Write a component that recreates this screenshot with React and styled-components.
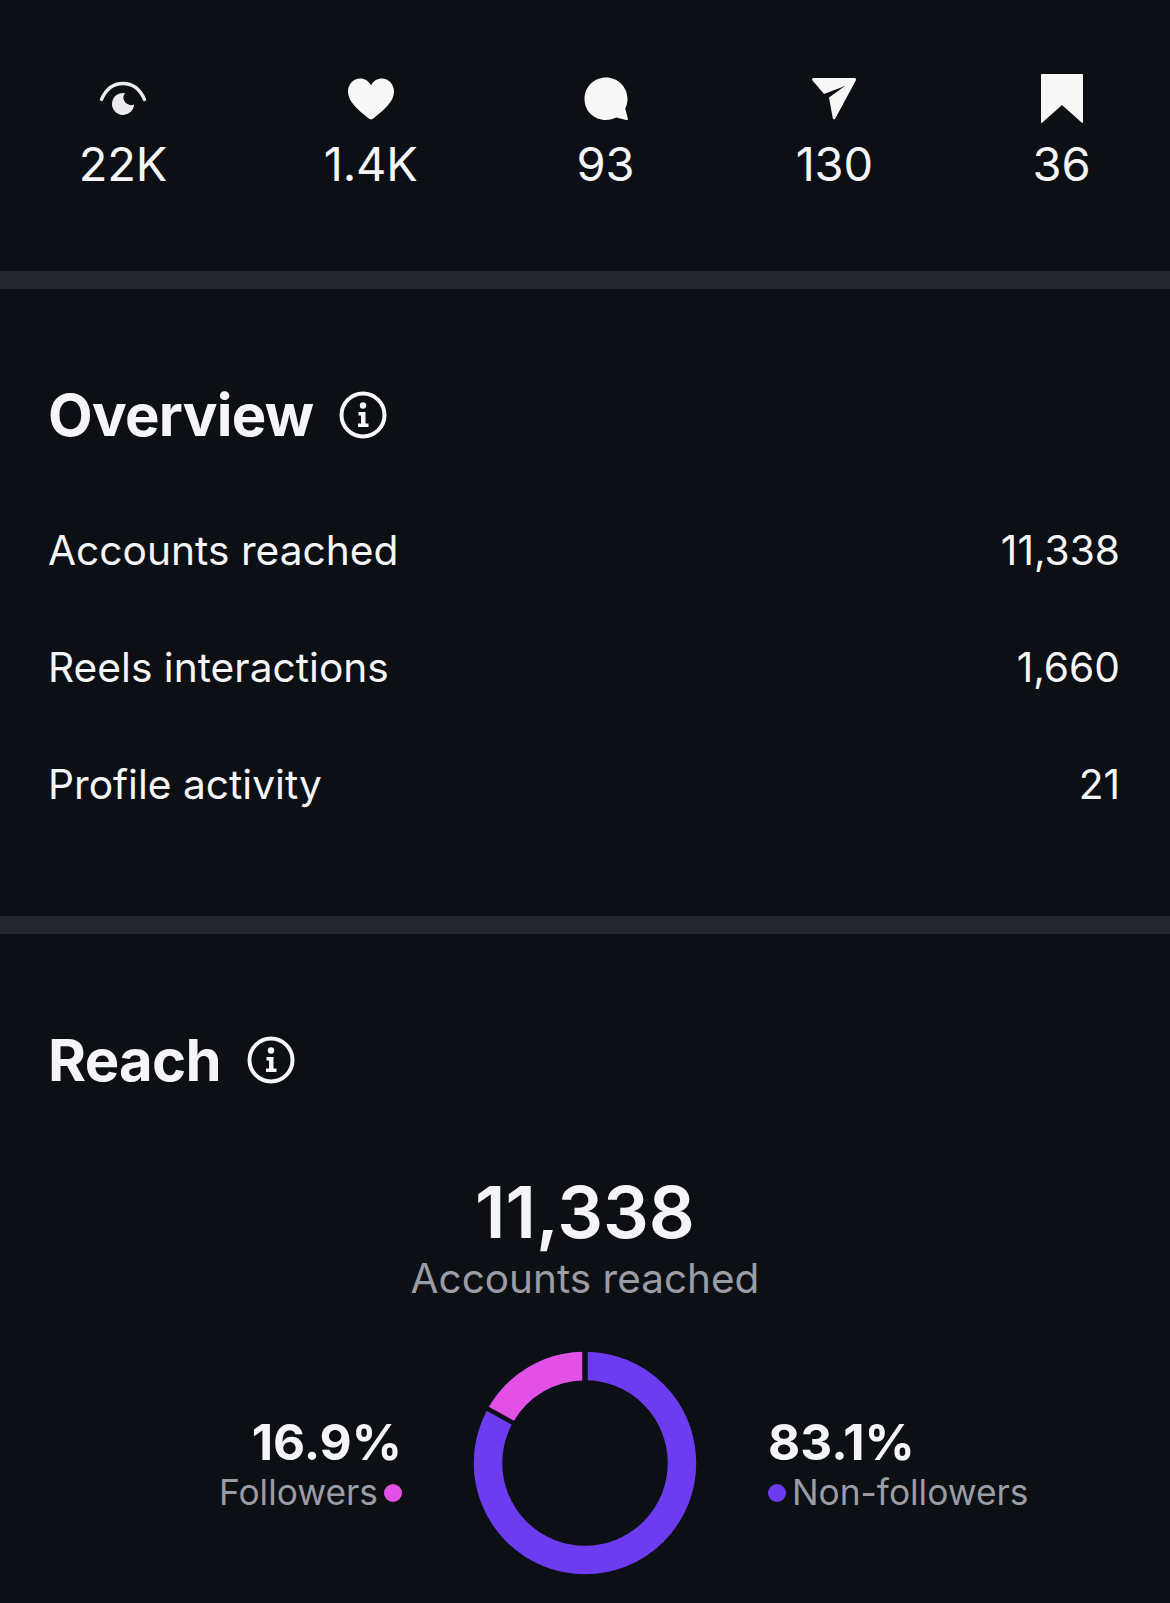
import React from 'react'
import styled, { createGlobalStyle } from 'styled-components'

const GlobalStyle = createGlobalStyle`
  html, body {
    margin: 0;
    padding: 0;
    background: #0c0f14;
  }
  body {
    font-family: Inter, "Liberation Sans", sans-serif;
    color: #f5f5f7;
    overflow: hidden;
  }
`

const Page = styled.div`
  width: 1170px;
  height: 1603px;
  overflow: hidden;
  background: #0c0f14;
`

const StatsBar = styled.div`
  height: 271px;
  box-sizing: border-box;
  padding: 75px 81px 0;
  display: grid;
  grid-template-columns: 84px 91px 58px 79px 55px;
  justify-content: space-between;
  align-items: start;
`

const Stat = styled.div`
  display: flex;
  flex-direction: column;
  align-items: center;
`

const StatIcon = styled.svg`
  width: 48px;
  height: 48px;
  display: block;
  fill: #f7f7f8;
  overflow: visible;
`

const StatValue = styled.div`
  margin-top: 18px;
  font-size: 47px;
  line-height: 46px;
  font-weight: 400;
  letter-spacing: -0.2px;
  white-space: nowrap;
`

const Divider = styled.div`
  height: 18px;
  background: #23262b;
`

const Section = styled.section`
  padding: ${(p) => p.$padding};
`

const HeadingRow = styled.div`
  display: flex;
  align-items: center;
  gap: 26px;
`

const Heading = styled.h2`
  margin: 0;
  font-size: 58px;
  line-height: 66px;
  font-weight: 700;
  letter-spacing: -0.7px;
`

const InfoIcon = styled.svg`
  width: 48px;
  height: 48px;
  display: block;
`

const MetricList = styled.div`
  margin-top: 78px;
  display: flex;
  flex-direction: column;
  gap: 67px;
`

const Metric = styled.div`
  display: flex;
  justify-content: space-between;
  font-size: 40.7px;
  line-height: 50px;
`

const ReachTotal = styled.div`
  margin: 79px -1px 0 1px;
  text-align: center;
  font-size: 72px;
  line-height: 80px;
  font-weight: 600;
`

const ReachCaption = styled.div`
  margin: 2px -1px 0 1px;
  text-align: center;
  font-size: 40.5px;
  line-height: 50px;
  color: #9a9ca6;
`

const Breakdown = styled.div`
  margin: 47px -50px 0 -48px;
  display: grid;
  grid-template-columns: 1fr auto 1fr;
  column-gap: 71px;
  align-items: center;
`

const Share = styled.div`
  padding-top: 4px;
  display: flex;
  flex-direction: column;
  align-items: ${(p) => (p.$right ? 'flex-start' : 'flex-end')};
`

const Percent = styled.div`
  font-size: 49.5px;
  line-height: 56px;
  font-weight: 700;
`

const Legend = styled.div`
  display: flex;
  align-items: center;
  gap: 6px;
  font-size: 35.3px;
  line-height: 46px;
  color: #9a9ca6;
`

const Dot = styled.span`
  width: 18px;
  height: 18px;
  border-radius: 50%;
  background: ${(p) => p.$color};
`

const DonutSvg = styled.svg`
  width: 224px;
  height: 224px;
  display: block;
`

const BG = '#0c0f14'

const Eye = () => (
  <StatIcon viewBox="0 0 48 48">
    <path d="M2.500 24.500C7 14 15 8.500 24 8.500s17 5.500 21.500 16" fill="none" stroke="#ececee" strokeWidth="3.400" strokeLinecap="round" />
    <path d="M26 18.200A11 11 0 1 0 35 29.500A7.500 7.500 0 0 1 26 18.200z" fill="#ececee" />
  </StatIcon>
)

const Heart = () => (
  <StatIcon viewBox="0 0 48 48">
    <path d="M24 44.500c-1 0-1.700-.5-2.600-1.200C11 34.500 1 27 1 16.500 1 9.300 6.500 3.500 13 3.500c4.800 0 8.700 2.700 11 6.700 2.300-4 6.200-6.700 11-6.700 6.500 0 12 5.800 12 13 0 10.500-10 18-20.400 26.800-.9.700-1.600 1.200-2.600 1.200z" />
  </StatIcon>
)

const Bubble = () => (
  <StatIcon viewBox="0 0 48 48">
    <path d="M24 2.500C36 2.500 45.500 12 45.500 24c0 3.600-.8 6.600-2.300 9.500l2.600 10c.3 1.200-.4 1.900-1.600 1.600l-10-2.600c-3 1.500-6.600 2.500-10.200 2.500C12 45 2.500 36 2.500 24S12 2.500 24 2.500z" />
  </StatIcon>
)

const Send = () => (
  <StatIcon viewBox="0 0 48 48">
    <path d="M3.500 3h41c1.300 0 2 1.100 1.400 2.300L25.300 43.500c-.7 1.300-2.200 1.100-2.500-.3L19 22.500 35 11 14 19 2.500 5.500C1.600 4.500 2.200 3 3.500 3z" />
  </StatIcon>
)

const Bookmark = () => (
  <StatIcon viewBox="0 0 48 48">
    <path d="M4 -1h40c.8 0 1 .4 1 1v47c0 .9-.8 1.200-1.400.6L24 30 4.400 47.600c-.6.600-1.400.3-1.400-.6V0c0-.6.200-1 1-1z" />
  </StatIcon>
)

const Info = () => (
  <InfoIcon viewBox="0 0 48 48">
    <circle cx="24" cy="24" r="21.500" fill="none" stroke="#f7f7f8" strokeWidth="4" />
    <circle cx="24" cy="14.500" r="3.200" fill="#f7f7f8" />
    <path d="M19.500 21h7v11.500h3V36h-10.500v-3.500h3V24.500h-2.500z" fill="#f7f7f8" />
  </InfoIcon>
)

const Donut = ({ followers }) => {
  const r = 97
  const c = 2 * Math.PI * r
  const pinkLen = (followers / 100) * c
  const angle = -(followers / 100) * 360
  return (
    <DonutSvg viewBox="0 0 224 224">
      <circle cx="112" cy="112" r={r} fill="none" stroke="#6e3cf0" strokeWidth="28.500" />
      <circle
        cx="112"
        cy="112"
        r={r}
        fill="none"
        stroke="#e250e5"
        strokeWidth="28.500"
        strokeDasharray={`${pinkLen} ${c - pinkLen}`}
        transform={`rotate(${angle - 90} 112 112)`}
      />
      <line x1="112" y1="0" x2="112" y2="32" stroke={BG} strokeWidth="5.500" />
      <line x1="112" y1="0" x2="112" y2="32" stroke={BG} strokeWidth="4.500" transform={`rotate(${angle} 112 112)`} />
    </DonutSvg>
  )
}

const stats = [
  { icon: <Eye />, value: '22K' },
  { icon: <Heart />, value: '1.4K' },
  { icon: <Bubble />, value: '93' },
  { icon: <Send />, value: '130' },
  { icon: <Bookmark />, value: '36' },
]

const metrics = [
  { label: 'Accounts reached', value: '11,338' },
  { label: 'Reels interactions', value: '1,660' },
  { label: 'Profile activity', value: '21' },
]

export default function App() {
  return (
    <Page>
      <GlobalStyle />
      <StatsBar>
        {stats.map((s) => (
          <Stat key={s.value}>
            {s.icon}
            <StatValue>{s.value}</StatValue>
          </Stat>
        ))}
      </StatsBar>
      <Divider />
      <Section $padding="93px 50px 106px 48px">
        <HeadingRow>
          <Heading>Overview</Heading>
          <Info />
        </HeadingRow>
        <MetricList>
          {metrics.map((m) => (
            <Metric key={m.label}>
              <span>{m.label}</span>
              <span>{m.value}</span>
            </Metric>
          ))}
        </MetricList>
      </Section>
      <Divider />
      <Section $padding="93px 50px 0 48px">
        <HeadingRow>
          <Heading>Reach</Heading>
          <Info />
        </HeadingRow>
        <ReachTotal>11,338</ReachTotal>
        <ReachCaption>Accounts reached</ReachCaption>
        <Breakdown>
          <Share>
            <Percent>16.9%</Percent>
            <Legend>
              Followers
              <Dot $color="#e250e5" />
            </Legend>
          </Share>
          <Donut followers={16.9} />
          <Share $right>
            <Percent>83.1%</Percent>
            <Legend>
              <Dot $color="#6e3cf0" />
              Non-followers
            </Legend>
          </Share>
        </Breakdown>
      </Section>
    </Page>
  )
}
